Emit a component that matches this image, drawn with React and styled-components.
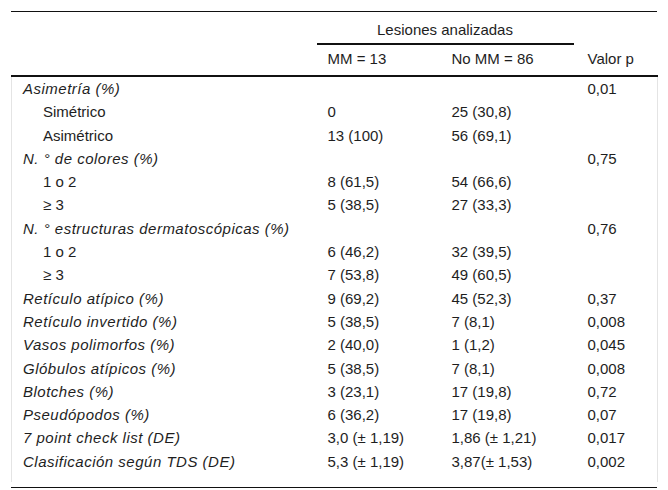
import React from 'react';
import styled, { createGlobalStyle } from 'styled-components';

// =============================================================================

let rows = [
  { label: 'Asimetría (%)', head: true, p: '0,01' },
  { label: 'Simétrico', mm: '0', no: '25 (30,8)' },
  { label: 'Asimétrico', mm: '13 (100)', no: '56 (69,1)' },
  { label: 'N. ° de colores (%)', head: true, p: '0,75' },
  { label: '1 o 2', mm: '8 (61,5)', no: '54 (66,6)' },
  { label: '≥ 3', mm: '5 (38,5)', no: '27 (33,3)' },
  { label: 'N. ° estructuras dermatoscópicas (%)', head: true, p: '0,76' },
  { label: '1 o 2', mm: '6 (46,2)', no: '32 (39,5)' },
  { label: '≥ 3', mm: '7 (53,8)', no: '49 (60,5)' },
  { label: 'Retículo atípico (%)', head: true, mm: '9 (69,2)', no: '45 (52,3)', p: '0,37' },
  { label: 'Retículo invertido (%)', head: true, mm: '5 (38,5)', no: '7 (8,1)', p: '0,008' },
  { label: 'Vasos polimorfos (%)', head: true, mm: '2 (40,0)', no: '1 (1,2)', p: '0,045' },
  { label: 'Glóbulos atípicos (%)', head: true, mm: '5 (38,5)', no: '7 (8,1)', p: '0,008' },
  { label: 'Blotches (%)', head: true, mm: '3 (23,1)', no: '17 (19,8)', p: '0,72' },
  { label: 'Pseudópodos (%)', head: true, mm: '6 (36,2)', no: '17 (19,8)', p: '0,07' },
  { label: '7 point check list (DE)', head: true, mm: '3,0 (± 1,19)', no: '1,86 (± 1,21)', p: '0,017' },
  { label: 'Clasificación según TDS (DE)', head: true, mm: '5,3 (± 1,19)', no: '3,87(± 1,53)', p: '0,002' }
];

// =============================================================================

let GlobalStyle = createGlobalStyle`
  body {
    margin: 0;
    background: #fff;
    font-family: "Liberation Sans", Arial, sans-serif;
    color: #1e1e1e;
  }
`

let Frame = styled.div`
  width: 646px;
  margin: 11px;
  border-top: 1px solid #111;
  border-bottom: 1px solid #111;
  padding-bottom: 5px;
`

let Table = styled.table`
  width: 100%;
  border-collapse: collapse;
  table-layout: fixed;
  font-size: 15px;
`

let Head = styled.thead`
  border-bottom: 2px solid #111;
`

let HeadRow = styled.tr`
  height: ${p => p.$h}px;
`

let HeadCell = styled.th`
  font-weight: normal;
  text-align: left;
  vertical-align: bottom;
  padding: 0 0 8px 11px;
  line-height: 17px;
`

let GroupCell = styled.th`
  font-weight: normal;
  padding: 0;
  vertical-align: bottom;
  line-height: 17px;
`

let GroupLabel = styled.div`
  text-align: center;
  margin-right: 3px;
  padding-bottom: 5px;
  border-bottom: 2px solid #111;
`

let Cell = styled.td`
  padding: 3px 0 3px ${p => p.$indent ? 31 : 11}px;
  line-height: 17.3px;
  font-style: ${p => p.$italic ? 'italic' : 'normal'};
  letter-spacing: ${p => p.$italic ? '0.5px' : 'normal'};
  white-space: nowrap;
  &:first-child { border-left: 1px solid #e4e4e4; }
  &:last-child { border-right: 1px solid #e4e4e4; }
`

let BodyRow = styled.tr`
  &:last-child td { padding-bottom: 12px; }
`

// =============================================================================

export default function App() {
  return (
    <>
      <GlobalStyle />
      <Frame>
        <Table>
          <colgroup>
            <col style={{ width: 305 }} />
            <col style={{ width: 124 }} />
            <col style={{ width: 136 }} />
            <col style={{ width: 81 }} />
          </colgroup>
          <Head>
            <HeadRow $h={33}>
              <HeadCell rowSpan={2} />
              <GroupCell colSpan={2}>
                <GroupLabel>Lesiones analizadas</GroupLabel>
              </GroupCell>
              <HeadCell rowSpan={2}>Valor p</HeadCell>
            </HeadRow>
            <HeadRow $h={31}>
              <HeadCell>MM = 13</HeadCell>
              <HeadCell>No MM = 86</HeadCell>
            </HeadRow>
          </Head>
          <tbody>
            {rows.map((r, i) =>
              <BodyRow key={i}>
                <Cell $italic={r.head} $indent={!r.head}>{r.label}</Cell>
                <Cell>{r.mm || ''}</Cell>
                <Cell>{r.no || ''}</Cell>
                <Cell>{r.p || ''}</Cell>
              </BodyRow>
            )}
          </tbody>
        </Table>
      </Frame>
    </>
  );
}
